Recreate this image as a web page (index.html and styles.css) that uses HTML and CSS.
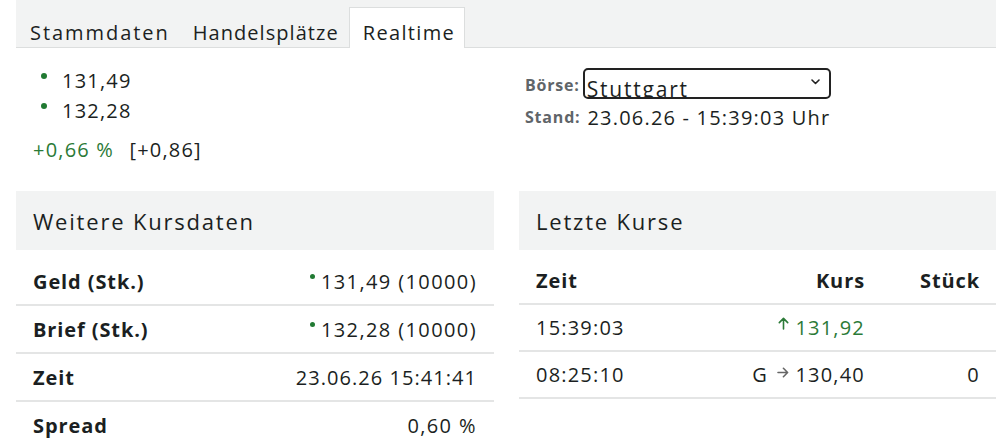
FILE: index.html
```html
<!DOCTYPE html>
<html lang="de">
<head>
    <meta charset="UTF-8">
    <meta name="viewport" content="width=device-width, initial-scale=1.0">
    <title>Realtime Kurse</title>
    <link rel="stylesheet" href="styles.css">
</head>
<body>
    <div class="tabs">
        <a href="#" class="tab first">Stammdaten</a>
        <a href="#" class="tab">Handelsplätze</a>
        <a href="#" class="tab active">Realtime</a>
    </div>

    <div class="quote">
        <div class="prices">
            <ul>
                <li><span class="dot"></span>131,49</li>
                <li><span class="dot"></span>132,28</li>
            </ul>
            <div class="change"><span class="up">+0,66 %</span> [+0,86]</div>
        </div>
        <div class="market">
            <div class="market-row">
                <span class="label">Börse:</span>
                <span class="select-wrap">
                    <select>
                        <option>Stuttgart</option>
                        <option>Xetra</option>
                        <option>Frankfurt</option>
                    </select>
                    <svg class="chevron" width="9" height="6" viewBox="0 0 9 6"><path d="M1 1l3.5 3.5L8 1" fill="none" stroke="#222" stroke-width="1.6" stroke-linecap="round" stroke-linejoin="round"/></svg>
                </span>
            </div>
            <div class="market-row">
                <span class="label">Stand:</span>
                <span class="stamp">23.06.26 - 15:39:03 Uhr</span>
            </div>
        </div>
    </div>

    <div class="panels">
        <div class="panel">
            <h2>Weitere Kursdaten</h2>
            <table class="data">
                <tr><th>Geld (Stk.)</th><td><span class="dot small"></span>131,49 (10000)</td></tr>
                <tr><th>Brief (Stk.)</th><td><span class="dot small"></span>132,28 (10000)</td></tr>
                <tr><th>Zeit</th><td class="time">23.06.26 15:41:41</td></tr>
                <tr><th>Spread</th><td>0,60 %</td></tr>
            </table>
        </div>
        <div class="panel">
            <h2>Letzte Kurse</h2>
            <table class="trades">
                <tr><th>Zeit</th><th class="num">Kurs</th><th class="num pieces">Stück</th></tr>
                <tr>
                    <td>15:39:03</td>
                    <td class="num up"><svg class="arrow" width="11" height="13" viewBox="0 0 11 13"><path d="M5.5 12V1.5M1.3 5.6l4.2-4.2 4.2 4.2" fill="none" stroke="#2b7a37" stroke-width="1.6" stroke-linecap="round" stroke-linejoin="round"/></svg>131,92</td>
                    <td class="num pieces"></td>
                </tr>
                <tr>
                    <td>08:25:10</td>
                    <td class="num">G <svg class="arrow right" width="12" height="11" viewBox="0 0 12 11"><path d="M1 5.5h9.5M6.4 1.3l4.2 4.2-4.2 4.2" fill="none" stroke="#666" stroke-width="1.6" stroke-linecap="round" stroke-linejoin="round"/></svg>130,40</td>
                    <td class="num pieces">0</td>
                </tr>
            </table>
        </div>
    </div>
</body>
</html>
```

FILE: styles.css
```css
body { margin: 0; font-family: "Open Sans", "Noto Sans", sans-serif; font-size: 20px; color: #1b1f22; background: #fff; letter-spacing: 1.2px; }

.tabs { display: flex; align-items: flex-end; height: 47px; margin: 0 2px 0 16px; background: #f2f3f3; border-bottom: 1px solid #dcdede; }
.tab { display: block; padding: 0 9px 0 13px; height: 40px; line-height: 50px; color: #1b1f22; text-decoration: none; border: 1px solid transparent; border-bottom: none; margin-bottom: -1px; letter-spacing: 1.05px; }
.tab.first { letter-spacing: 1.95px; padding-right: 8px; }
.tab.active { background: #fff; border-color: #dcdede; letter-spacing: 1.35px; }

.quote { display: grid; grid-template-columns: 478px 477px; column-gap: 25px; margin: 0 2px 0 16px; height: 143px; }
.prices { padding-top: 18px; }
.prices ul { list-style: none; margin: 0; padding: 0 0 0 25px; }
.prices li { line-height: 30px; }
.change { margin-top: 9px; line-height: 30px; padding-left: 17px; }
.up { color: #2b7a37; }
.change .up { margin-right: 9px; }

.dot { display: inline-block; width: 6px; height: 6px; border-radius: 50%; background: #217a33; vertical-align: 9px; margin-right: 15px; }
.dot.small { width: 5px; height: 5px; margin-right: 6px; vertical-align: 10px; }

.market { padding: 21px 0 0 6px; }
.market-row { display: flex; align-items: center; height: 32px; }
.label { font-size: 16px; font-weight: 700; color: #5f6569; margin-right: 3px; letter-spacing: 0.8px; }
.market-row + .market-row .label { margin-right: 7px; }
.stamp { letter-spacing: 1.2px; }
.select-wrap { position: relative; display: inline-block; }
select { -webkit-appearance: none; appearance: none; width: 248px; height: 31px; box-sizing: border-box; border: 2px solid #222; border-radius: 5px; background: #fff; font-family: inherit; font-size: 21px; color: #1b1f22; padding: 4px 0 0 2px; line-height: 31px; letter-spacing: 1.8px; }
.chevron { position: absolute; right: 11px; top: 11px; pointer-events: none; }

.panels { display: grid; grid-template-columns: 478px 477px; column-gap: 25px; margin: 0 2px 0 16px; }
.panel h2 { margin: 0 0 8px; height: 59px; line-height: 61px; background: #f2f3f3; font-size: 22px; font-weight: 400; padding-left: 17px; letter-spacing: 1.8px; }

table { width: 100%; border-collapse: collapse; }
th, td { height: 46px; border-bottom: 2px solid #e4e5e5; padding: 0 17px; }
.data th { text-align: left; font-weight: 700; letter-spacing: 0.9px; }
.data td { text-align: right; letter-spacing: 1.4px; }
.data td.time { letter-spacing: 1.05px; }
.trades th { text-align: left; font-weight: 700; height: 45px; letter-spacing: 0.9px; }
.trades td { height: 45px; }
.trades .num { text-align: right; }
.trades .pieces { width: 98px; padding-right: 16px; }
.trades tr > *:nth-child(2) { padding-right: 0; }
.arrow { vertical-align: 5px; margin-right: 6px; }
.arrow.right { vertical-align: 4px; margin-left: 3px; margin-right: 6px; }
```
